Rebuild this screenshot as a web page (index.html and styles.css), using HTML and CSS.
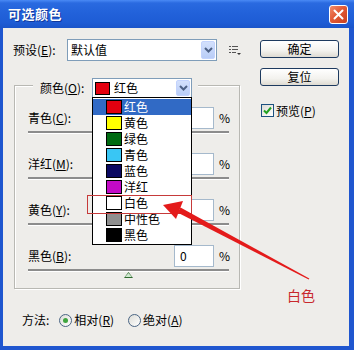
FILE: index.html
```html
<!DOCTYPE html>
<html>
<head>
  <meta charset="utf-8">
  <title>可选颜色</title>
  <link rel="stylesheet" href="styles.css">
</head>
<body>
  <div class="window">
    <div class="titlebar">
      <span class="title">可选颜色</span>
      <span class="close-btn">
        <svg width="11" height="11" viewBox="0 0 11 11"><path d="M1.5 1.5 L9.5 9.5 M9.5 1.5 L1.5 9.5" stroke="#fff" stroke-width="2" stroke-linecap="round"/></svg>
      </span>
    </div>
    <div class="panel">
      <div class="main">
        <div class="preset-row">
          <span class="label preset-label">预设(<u>E</u>):</span>
          <div class="combo preset-combo">
            <span class="combo-text">默认值</span>
            <span class="combo-arrow"><svg width="9" height="6" viewBox="0 0 9 6"><path d="M1 1 L4.5 4.5 L8 1" fill="none" stroke="#4d6185" stroke-width="2"/></svg></span>
          </div>
          <span class="menu-icon">
            <svg width="12" height="10" viewBox="0 0 12 10">
              <rect x="0" y="0" width="2" height="1" fill="#555"/>
              <rect x="3" y="0" width="6" height="1" fill="#555"/>
              <rect x="0" y="3" width="2" height="1" fill="#555"/>
              <rect x="3" y="3" width="6" height="1" fill="#555"/>
              <rect x="0" y="6" width="2" height="1" fill="#555"/>
              <rect x="3" y="6" width="4" height="1" fill="#555"/>
              <path d="M8 7 L12 7 L10 9 Z" fill="#333"/>
            </svg>
          </span>
        </div>

        <div class="group">
          <div class="legend">
            <span class="label legend-label">颜色(<u>O</u>):</span>
            <div class="combo color-combo">
              <span class="swatch swatch-red"></span>
              <span class="combo-text">红色</span>
              <span class="combo-arrow"><svg width="9" height="6" viewBox="0 0 9 6"><path d="M1 1 L4.5 4.5 L8 1" fill="none" stroke="#4d6185" stroke-width="2"/></svg></span>
              <ul class="color-list">
                <li class="active"><span class="swatch swatch-red"></span>红色</li>
                <li><span class="swatch swatch-yellow"></span>黄色</li>
                <li><span class="swatch swatch-green"></span>绿色</li>
                <li><span class="swatch swatch-cyan"></span>青色</li>
                <li><span class="swatch swatch-blue"></span>蓝色</li>
                <li><span class="swatch swatch-magenta"></span>洋红</li>
                <li><span class="swatch swatch-white"></span>白色</li>
                <li><span class="swatch swatch-gray"></span>中性色</li>
                <li><span class="swatch swatch-black"></span>黑色</li>
              </ul>
            </div>
          </div>

          <div class="slider-row">
            <div class="slider-top">
              <span class="label">青色(<u>C</u>):</span>
              <span class="num">0</span>
              <span class="pct">%</span>
            </div>
            <div class="track"><span class="thumb"></span></div>
          </div>
          <div class="slider-row">
            <div class="slider-top">
              <span class="label">洋红(<u>M</u>):</span>
              <span class="num">0</span>
              <span class="pct">%</span>
            </div>
            <div class="track"><span class="thumb"></span></div>
          </div>
          <div class="slider-row">
            <div class="slider-top">
              <span class="label">黄色(<u>Y</u>):</span>
              <span class="num">0</span>
              <span class="pct">%</span>
            </div>
            <div class="track"><span class="thumb"></span></div>
          </div>
          <div class="slider-row">
            <div class="slider-top">
              <span class="label">黑色(<u>B</u>):</span>
              <span class="num">0</span>
              <span class="pct">%</span>
            </div>
            <div class="track"><span class="thumb"></span></div>
          </div>
        </div>

        <div class="method-row">
          <span class="label method-label">方法:</span>
          <span class="radio checked"></span>
          <span class="radio-text">相对(<u>R</u>)</span>
          <span class="radio"></span>
          <span class="radio-text">绝对(<u>A</u>)</span>
        </div>
      </div>

      <div class="side">
        <div class="btn">确定</div>
        <div class="btn btn-second">复位</div>
        <div class="check-row">
          <span class="checkbox"><svg width="11" height="11" viewBox="0 0 11 11"><path d="M2 5.5 L4.5 8 L9 2.5" fill="none" stroke="#21a121" stroke-width="2"/></svg></span>
          <span>预览(<u>P</u>)</span>
        </div>
      </div>
    </div>

    <!-- annotation drawn over the screenshot -->
    <div class="callout-box"></div>
    <svg class="callout-arrow" width="354" height="350" viewBox="0 0 354 350">
      <polygon points="163,205 183,201 176,219" fill="#e41b1b"/>
      <polygon points="180.5,207.5 309.3,278.4 308.7,279.4 177.5,212.5" fill="#e41b1b"/>
    </svg>
    <span class="callout-text">白色</span>
  </div>
</body>
</html>
```

FILE: styles.css
```css
* {
  box-sizing: border-box;
}

body {
  margin: 0;
  background: #fff;
  font-family: "Noto Sans CJK SC", "Liberation Sans", sans-serif;
  font-size: 12px;
  line-height: 16px;
  color: #000;
}

u {
  text-decoration: underline;
  text-underline-offset: 1px;
}

.window {
  position: relative;
  width: 354px;
  height: 350px;
  overflow: hidden;
}

/* title bar */
.titlebar {
  height: 28px;
  display: flex;
  align-items: center;
  justify-content: space-between;
  padding: 0 6px 0 8px;
  background: linear-gradient(to bottom, #4a8af5 0, #2a6ae0 3px, #2262da 45%, #1e5cd5 80%, #1a54c9 100%);
}

.title {
  color: #fff;
  font-weight: bold;
  font-size: 13px;
  letter-spacing: 0.5px;
  text-shadow: 1px 1px 0 #10379a;
}

.close-btn {
  width: 19px;
  height: 19px;
  border: 1px solid #fff;
  border-radius: 3px;
  background: linear-gradient(135deg, #f08c6c 0%, #e25a36 45%, #c8401f 100%);
  display: flex;
  align-items: center;
  justify-content: center;
}

/* dialog body */
.panel {
  height: 322px;
  display: flex;
  background: #eeedea;
  border: solid #1f56cf;
  border-width: 0 5px 4px 3px;
}

.main {
  width: 240px;
  padding: 11px 0 0 10px;
}

.preset-row {
  display: flex;
  align-items: center;
  height: 22px;
}

.preset-label {
  width: 54px;
}

.combo {
  position: relative;
  display: flex;
  align-items: center;
  background: #fff;
  border: 1px solid #7f9db9;
}

.preset-combo {
  width: 150px;
  height: 22px;
  padding-left: 3px;
}

.combo-text {
  flex: 1;
}

.combo-arrow {
  display: flex;
  align-items: center;
  justify-content: center;
  background: linear-gradient(to bottom, #d3e0fc, #b9cdf7);
  border: 1px solid #c3d3fd;
  border-radius: 2px;
}

.preset-combo .combo-arrow {
  width: 14px;
  height: 18px;
  margin-right: 1px;
}

.menu-icon {
  display: flex;
  margin-left: 12px;
  margin-top: 2px;
}

/* colour group */
.group {
  margin: 24px 0 0 1px;
  width: 226px;
  border: 1px solid #b8b8b3;
  box-shadow: inset 1px 1px 0 #fff, 1px 1px 0 #fff;
  padding: 0 10px 10px 13px;
}

.legend {
  display: flex;
  align-items: center;
  width: fit-content;
  margin: -8px 0 9px 5px;
  padding: 0 6px 0 7px;
  background: #eeedea;
}

.legend-label {
  width: 52px;
}

.color-combo {
  width: 100px;
  height: 20px;
  padding-left: 2px;
}

.color-combo .combo-arrow {
  width: 14px;
  height: 16px;
  margin-right: 1px;
}

.swatch {
  display: inline-block;
  width: 16px;
  height: 14px;
  border: 1px solid #000;
  margin-right: 2px;
}

.color-combo > .swatch {
  width: 15px;
  height: 13px;
  margin-right: 4px;
}

.swatch-red { background: #e3000f; }
.swatch-yellow { background: #ffff00; }
.swatch-green { background: #006b12; }
.swatch-cyan { background: #39c6f4; }
.swatch-blue { background: #0b0a62; }
.swatch-magenta { background: #c30ac6; }
.swatch-white { background: #fff; }
.swatch-gray { background: #8f8f8f; }
.swatch-black { background: #000; }

.color-list {
  position: absolute;
  top: 18px;
  left: -1px;
  z-index: 2;
  width: 100px;
  margin: 0;
  padding: 1px 0;
  list-style: none;
  background: #fff;
  border: 1px solid #000;
}

.color-list li {
  display: flex;
  align-items: center;
  height: 16px;
  padding-left: 13px;
}

.color-list li.active {
  background: #316ac5;
  color: #fff;
}

.slider-row {
  padding-bottom: 7px;
  margin-bottom: 13px;
}

.slider-row:last-child {
  margin-bottom: 0;
}

.slider-top {
  display: flex;
  align-items: center;
  height: 22px;
}

.slider-top .label {
  flex: 1;
}

.num {
  width: 40px;
  height: 22px;
  line-height: 20px;
  padding-left: 5px;
  background: #fff;
  border: 1px solid #a5b9cc;
}

.pct {
  margin-left: 5px;
  width: 10px;
}

.track {
  position: relative;
  height: 2px;
  margin-top: 2px;
  background: #8c8c8c;
  box-shadow: 0 1px 0 #fff;
}

.thumb {
  position: absolute;
  left: 96px;
  top: 3px;
  width: 9px;
  height: 6px;
  background: #2f6a2f;
  clip-path: polygon(50% 0, 100% 100%, 0 100%);
}

.thumb::after {
  content: "";
  position: absolute;
  left: 1px;
  top: 1px;
  width: 7px;
  height: 4px;
  background: #cfe9cf;
  clip-path: polygon(50% 0, 100% 100%, 0 100%);
}

/* method radios */
.method-row {
  display: flex;
  align-items: center;
  height: 16px;
  margin: 23px 0 0 9px;
}

.method-label {
  margin-right: 10px;
}

.radio {
  width: 13px;
  height: 13px;
  border: 1px solid #4a6584;
  border-radius: 50%;
  background: linear-gradient(135deg, #dcdcd6, #fff);
  display: flex;
  align-items: center;
  justify-content: center;
  margin-right: 2px;
}

.radio.checked::after {
  content: "";
  width: 5px;
  height: 5px;
  border-radius: 50%;
  background: #3fa53f;
}

.radio-text {
  margin-right: 14px;
}

/* right column */
.side {
  width: 79px;
  margin-left: 17px;
  padding-top: 12px;
}

.btn {
  height: 18px;
  line-height: 16px;
  text-align: center;
  border: 1px solid #1d3a5f;
  border-radius: 3px;
  background: linear-gradient(to bottom, #fff 0%, #f3f2ee 60%, #dedbd2 100%);
}

.btn-second {
  margin-top: 10px;
}

.check-row {
  display: flex;
  align-items: center;
  height: 13px;
  margin: 18px 0 0 1px;
}

.checkbox {
  width: 13px;
  height: 13px;
  border: 1px solid #1c5180;
  background: linear-gradient(135deg, #dcdcd6, #fff);
  display: flex;
  align-items: center;
  justify-content: center;
  margin-right: 2px;
}

/* red annotation */
.callout-box {
  position: absolute;
  left: 87px;
  top: 195px;
  width: 105px;
  height: 19px;
  border: 1px solid #c63a3a;
  z-index: 3;
}

.callout-arrow {
  position: absolute;
  left: 0;
  top: 0;
  z-index: 4;
}

.callout-text {
  position: absolute;
  left: 287px;
  top: 286px;
  font-size: 14px;
  line-height: 18px;
  color: #c8282c;
}
```
